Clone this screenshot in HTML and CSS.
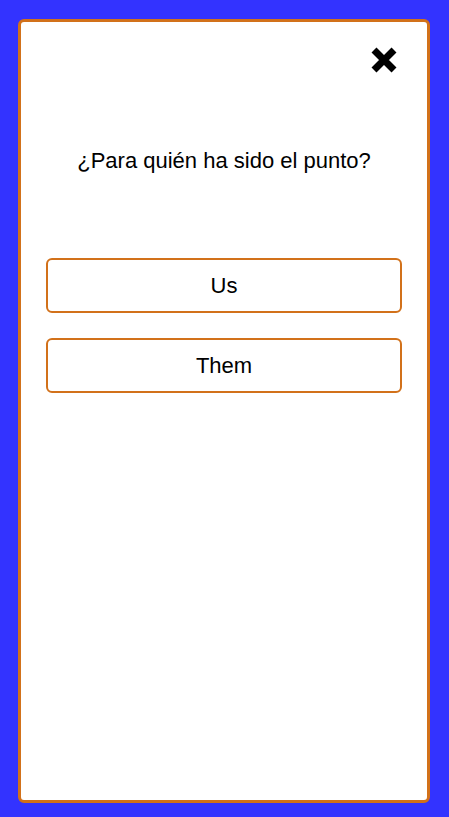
FILE: index.html
```html
<!DOCTYPE html>
<html lang="es">
<head>
<meta charset="utf-8">
<title>Punto</title>
<link rel="stylesheet" href="styles.css">
</head>
<body>
<div class="panel">
  <div class="top">
    <button class="close" aria-label="Cerrar">
      <svg width="26" height="26" viewBox="0 0 26 26">
        <path d="M3 3 L23 23 M23 3 L3 23" stroke="#000" stroke-width="7" stroke-linecap="butt"/>
      </svg>
    </button>
  </div>
  <p class="question">¿Para quién ha sido el punto?</p>
  <div class="options">
    <button class="option">Us</button>
    <button class="option">Them</button>
  </div>
</div>
</body>
</html>
```
FILE: styles.css
```css
html, body {
  margin: 0;
  height: 100%;
}
body {
  background: #3333ff;
  padding: 19px 19px 14px 18px;
  box-sizing: border-box;
  font-family: "Liberation Sans", Arial, sans-serif;
}
.panel {
  height: 100%;
  box-sizing: border-box;
  background: #fff;
  border: 3px solid #d2711a;
  border-radius: 6px;
  padding: 25px 25px 0 25px;
}
.top {
  display: flex;
  justify-content: flex-end;
  padding-right: 5px;
}
.close {
  border: 0;
  background: none;
  padding: 0;
  width: 26px;
  height: 26px;
  display: block;
}
.close svg { display: block; }
.question {
  margin: 75px 0 0;
  text-align: center;
  font-size: 22px;
  line-height: 25px;
  color: #000;
}
.options {
  margin-top: 85px;
  display: flex;
  flex-direction: column;
  gap: 25px;
}
.option {
  height: 55px;
  border: 2px solid #d2711a;
  border-radius: 6px;
  background: #fff;
  font-family: "Liberation Sans", Arial, sans-serif;
  font-size: 22px;
  color: #000;
}
```
